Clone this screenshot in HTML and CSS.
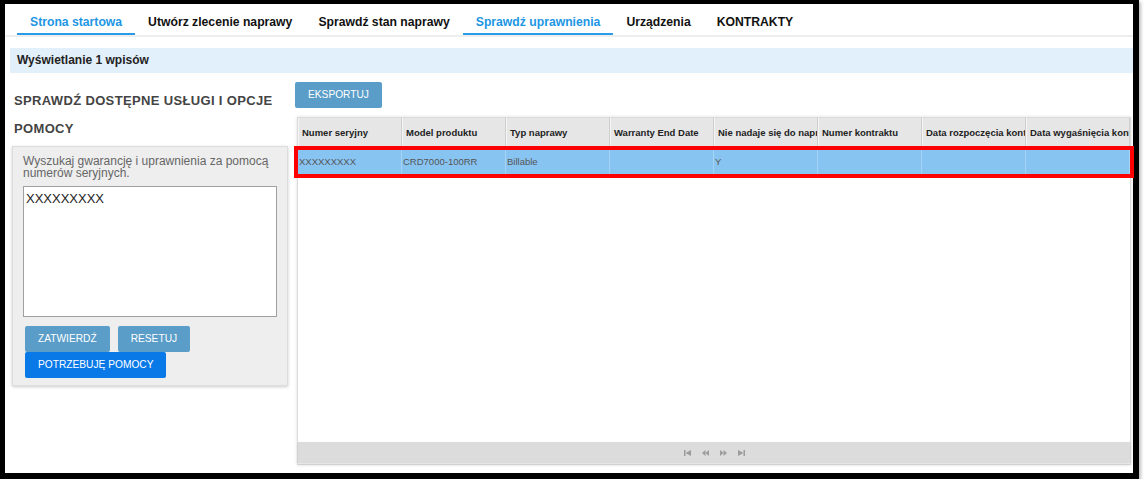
FILE: index.html
```
<!DOCTYPE html>
<html lang="pl">
<head>
    <meta charset="UTF-8">
    <title>Sprawdź uprawnienia</title>
    <link rel="stylesheet" href="styles.css">
</head>
<body>
<div class="frame">

    <!-- Top navigation -->
    <div class="nav">
        <div class="tab tab-active">Strona startowa</div>
        <div class="tab">Utwórz zlecenie naprawy</div>
        <div class="tab">Sprawdź stan naprawy</div>
        <div class="tab tab-active">Sprawdź uprawnienia</div>
        <div class="tab">Urządzenia</div>
        <div class="tab">KONTRAKTY</div>
    </div>

    <div class="banner">Wyświetlanie 1 wpisów</div>

    <div class="main">
        <!-- Search panel -->
        <div class="side">
            <h2 class="side-title">Sprawdź dostępne usługi i opcje pomocy</h2>
            <div class="search-box">
                <p class="search-hint">Wyszukaj gwarancję i uprawnienia za pomocą numerów seryjnych.</p>
                <div class="serials">XXXXXXXXX</div>
                <div class="btn-row">
                    <div class="btn">Zatwierdź</div>
                    <div class="btn">Resetuj</div>
                </div>
                <div class="btn btn-help">Potrzebuję pomocy</div>
            </div>
        </div>

        <!-- Results -->
        <div class="results">
            <div class="btn btn-export">Eksportuj</div>
            <div class="grid">
                <div class="grid-head">
                    <div class="cell">Numer seryjny</div>
                    <div class="cell">Model produktu</div>
                    <div class="cell">Typ naprawy</div>
                    <div class="cell">Warranty End Date</div>
                    <div class="cell">Nie nadaje się do naprawy</div>
                    <div class="cell">Numer kontraktu</div>
                    <div class="cell">Data rozpoczęcia kontraktu</div>
                    <div class="cell">Data wygaśnięcia kontraktu</div>
                </div>
                <div class="grid-body">
                    <div class="grid-row row-selected">
                        <div class="cell">XXXXXXXXX</div>
                        <div class="cell">CRD7000-100RR</div>
                        <div class="cell">Billable</div>
                        <div class="cell"></div>
                        <div class="cell">Y</div>
                        <div class="cell"></div>
                        <div class="cell"></div>
                        <div class="cell"></div>
                    </div>
                </div>
                <div class="pager">
                    <svg width="7" height="6" viewBox="0 0 7 6"><rect x="0" y="0" width="1.5" height="6"/><polygon points="7,0 1.5,3 7,6"/></svg>
                    <svg width="7" height="6" viewBox="0 0 7 6"><polygon points="3.5,0 0,3 3.5,6"/><polygon points="7,0 3.5,3 7,6"/></svg>
                    <svg width="7" height="6" viewBox="0 0 7 6"><polygon points="0,0 3.5,3 0,6"/><polygon points="3.5,0 7,3 3.5,6"/></svg>
                    <svg width="7" height="6" viewBox="0 0 7 6"><polygon points="0,0 5.5,3 0,6"/><rect x="5.5" y="0" width="1.5" height="6"/></svg>
                </div>
            </div>
        </div>
    </div>

</div>
</body>
</html>
```

FILE: styles.css
```
/* Reset */
* {
    margin: 0;
    padding: 0;
    box-sizing: border-box;
}

body {
    font-family: "Liberation Sans", Arial, sans-serif;
    background-color: #fff;
    color: #222;
}

.frame {
    width: 1139px;
    height: 479px;
    border-style: solid;
    border-color: #000;
    border-width: 4px 6px 6px 5px;
    box-shadow: 2px 2px 3px rgba(0, 0, 0, 0.25);
    display: flex;
    flex-direction: column;
}

/* Navigation */
.nav {
    display: flex;
    padding-left: 12px;
    border-bottom: 2px solid #eeeeee;
}

.tab {
    font-size: 12.2px;
    font-weight: bold;
    line-height: 16px;
    padding: 10px 13px 3px;
    border-bottom: 2px solid transparent;
    color: #111;
}

.tab-active {
    color: #2196e3;
    border-bottom-color: #2a9be6;
}

.banner {
    margin: 11px 0 0 5px;
    height: 25px;
    line-height: 25px;
    padding-left: 7px;
    background-color: #e2f0fb;
    font-size: 12px;
    font-weight: bold;
    color: #222;
}

/* Main layout */
.main {
    flex: 1;
    display: flex;
    gap: 7px;
    padding: 0 2px 8px 7px;
}

.side {
    width: 276px;
    flex-shrink: 0;
}

.side-title {
    margin-top: 14px;
    padding-left: 2px;
    font-size: 13px;
    line-height: 28px;
    letter-spacing: 0.35px;
    text-transform: uppercase;
    color: #444;
}

.search-box {
    margin-top: 3px;
    height: 240px;
    padding: 8px 10px 0;
    background-color: #eeeeee;
    border: 1px solid #dddddd;
    box-shadow: 0 1px 3px rgba(0, 0, 0, 0.2);
}

.search-hint {
    font-size: 12px;
    line-height: 12px;
    color: #666;
}

.serials {
    margin-top: 7px;
    height: 131px;
    padding: 4px 2px;
    background-color: #fff;
    border: 1px solid #a0a0a0;
    font-size: 13px;
    color: #222;
}

/* Buttons */
.btn-row {
    display: flex;
    gap: 8px;
    margin-top: 9px;
}

.btn {
    display: inline-block;
    height: 26px;
    line-height: 26px;
    padding: 0 13px;
    font-size: 10.2px;
    text-transform: uppercase;
    color: #fff;
    background-color: #5a9dc8;
    border-radius: 2px;
    cursor: pointer;
}

.btn-row .btn:first-child {
    margin-left: 2px;
}

.btn-help {
    margin-left: 2px;
    background-color: #0a79e8;
}

/* Results grid */
.results {
    flex: 1;
    display: flex;
    flex-direction: column;
    align-items: flex-start;
}

.btn-export {
    margin-top: 9px;
}

.grid {
    flex: 1;
    align-self: stretch;
    margin: 9px 0 0 2px;
    display: flex;
    flex-direction: column;
    border: 1px solid #dcdcdc;
    box-shadow: 0 0 3px rgba(0, 0, 0, 0.15);
}

.grid-head,
.grid-row {
    display: grid;
    grid-template-columns: repeat(8, 104px);
}

.grid-head {
    height: 29px;
    background-color: #e6e6e6;
}

.grid-head .cell {
    line-height: 29px;
    padding-left: 3px;
    font-size: 9.5px;
    font-weight: bold;
    color: #222;
    border-left: 1px solid #f4f4f4;
    border-right: 1px solid #cfcfcf;
}

.cell {
    white-space: nowrap;
    overflow: hidden;
}

.grid-body {
    flex: 1;
    padding-top: 3px;
}

.grid-row {
    height: 24px;
}

.grid-row .cell {
    line-height: 24px;
    padding-left: 1px;
    font-size: 9.5px;
    color: #555;
    border-right: 1px solid #a6d2f3;
}

.row-selected {
    background-color: #88c4f2;
    outline: 4px solid #ff0000;
}

.pager {
    height: 21px;
    margin-bottom: 1px;
    background-color: #dcdcdc;
    box-shadow: 0 1px 2px rgba(0, 0, 0, 0.15);
    display: flex;
    justify-content: center;
    align-items: center;
    gap: 11px;
}

.pager svg {
    fill: #9c9c9c;
}
```
